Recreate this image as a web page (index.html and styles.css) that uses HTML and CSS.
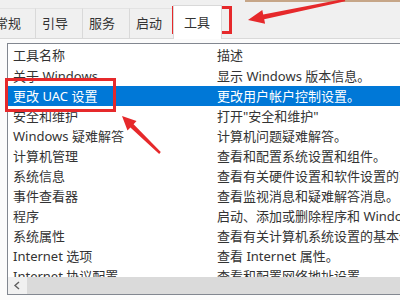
FILE: index.html
```html
<!DOCTYPE html>
<html lang="zh-CN">
<head>
<meta charset="utf-8">
<title>系统配置 - 工具</title>
<link rel="stylesheet" href="styles.css">
</head>
<body>
<div class="window">
  <div class="tabs">
    <div class="tab first">常规</div>
    <div class="tab">引导</div>
    <div class="tab">服务</div>
    <div class="tab">启动</div>
    <div class="tab active">工具</div>
  </div>
  <div class="page">
    <div class="list">
      <div class="row head"><div class="c1">工具名称</div><div class="c2">描述</div></div>
      <div class="rows">
        <div class="row"><div class="c1">关于 Windows</div><div class="c2">显示 Windows 版本信息。</div></div>
        <div class="row sel"><div class="c1">更改 UAC 设置</div><div class="c2">更改用户帐户控制设置。</div></div>
        <div class="row"><div class="c1">安全和维护</div><div class="c2">打开"安全和维护"</div></div>
        <div class="row"><div class="c1">Windows 疑难解答</div><div class="c2">计算机问题疑难解答。</div></div>
        <div class="row"><div class="c1">计算机管理</div><div class="c2">查看和配置系统设置和组件。</div></div>
        <div class="row"><div class="c1">系统信息</div><div class="c2">查看有关硬件设置和软件设置的高级信息。</div></div>
        <div class="row"><div class="c1">事件查看器</div><div class="c2">查看监视消息和疑难解答消息。</div></div>
        <div class="row"><div class="c1">程序</div><div class="c2">启动、添加或删除程序和 Windows 功能。</div></div>
        <div class="row"><div class="c1">系统属性</div><div class="c2">查看有关计算机系统设置的基本信息。</div></div>
        <div class="row"><div class="c1">Internet 选项</div><div class="c2">查看 Internet 属性。</div></div>
        <div class="row"><div class="c1">Internet 协议配置</div><div class="c2">查看和配置网络地址设置。</div></div>
      </div>
      <div class="hscroll">
        <div class="hs-btn"><svg width="8" height="9" viewBox="0 0 8 9"><path d="M6 1 L2 4.5 L6 8" fill="none" stroke="#606060" stroke-width="1.4"/></svg></div>
        <div class="hs-thumb"></div>
      </div>
    </div>
  </div>
  <div class="topline"></div>
  <div class="mark mark-tab"></div>
  <div class="mark mark-row"></div>
  <svg class="arrows" width="400" height="300" viewBox="0 0 400 300">
    <polygon points="248,20 262.3,9.9 263.2,14.4 344.8,-1.2 345.2,1.2 264.2,19.2 265.1,23.7" fill="#e6292b"/>
    <polygon points="122,116 136.5,121.1 133.6,124.2 160.8,152.1 159.2,153.9 130.4,127.4 127.5,130.5" fill="#e6292b"/>
  </svg>
</div>
</body>
</html>
```

FILE: styles.css
```css
body {
  margin: 0;
  width: 400px;
  height: 300px;
  overflow: hidden;
  background: #fbfbfb;
  font-family: "Noto Sans", "Noto Sans CJK SC", sans-serif;
  font-size: 13px;
  color: #333;
}

.window {
  position: relative;
  width: 400px;
  height: 300px;
  overflow: hidden;
}

.tabs {
  display: flex;
  align-items: flex-end;
  height: 39px;
  box-sizing: border-box;
  background: #f0f0f0;
  border-bottom: 1px solid #d9d9d9;
}

.tab {
  width: 47px;
  height: 30px;
  box-sizing: border-box;
  padding-left: 6px;
  line-height: 29px;
  border-top: 1px solid #e3e3e3;
  border-right: 1px solid #d9d9d9;
  background: #f0f0f0;
  white-space: nowrap;
  flex: none;
}

.tab.first {
  margin-left: -11px;
}

.tab.active {
  position: relative;
  z-index: 1;
  width: 49px;
  height: 34px;
  margin-left: -4px;
  margin-bottom: -1px;
  padding-left: 10px;
  line-height: 32px;
  background: #fff;
  border: 1px solid #d9d9d9;
  border-bottom: none;
}

.page {
  padding: 4px 0 0 7px;
}

.list {
  width: 400px;
  border: 1px solid #828790;
  border-right: none;
  background: #fff;
}

.row {
  display: grid;
  grid-template-columns: 204px 1fr;
  height: 20px;
  line-height: 20px;
  white-space: nowrap;
}

.row.head {
  height: 22px;
  line-height: 22px;
}

.c1,
.c2 {
  padding-left: 5px;
  overflow: hidden;
}

.rows {
  height: 211px;
  overflow: hidden;
}

.row.sel {
  background: #0078d7;
  color: #fff;
}

.hscroll {
  display: flex;
  height: 17px;
  background: #f0f0f0;
}

.hs-btn {
  width: 17px;
  display: flex;
  align-items: center;
  justify-content: center;
}

.hs-thumb {
  flex: 1;
  margin-left: 2px;
  background: #dadada;
}

.topline {
  position: absolute;
  left: 245px;
  top: 0;
  width: 155px;
  height: 2px;
  background: #c6a688;
}

.mark {
  position: absolute;
  box-sizing: border-box;
  border: 3px solid #e6292b;
}

.mark-tab {
  left: 172px;
  top: 6px;
  width: 60px;
  height: 28px;
}

.mark-row {
  left: 5px;
  top: 78px;
  width: 111px;
  height: 34px;
}

.arrows {
  position: absolute;
  left: 0;
  top: 0;
  pointer-events: none;
}
```
